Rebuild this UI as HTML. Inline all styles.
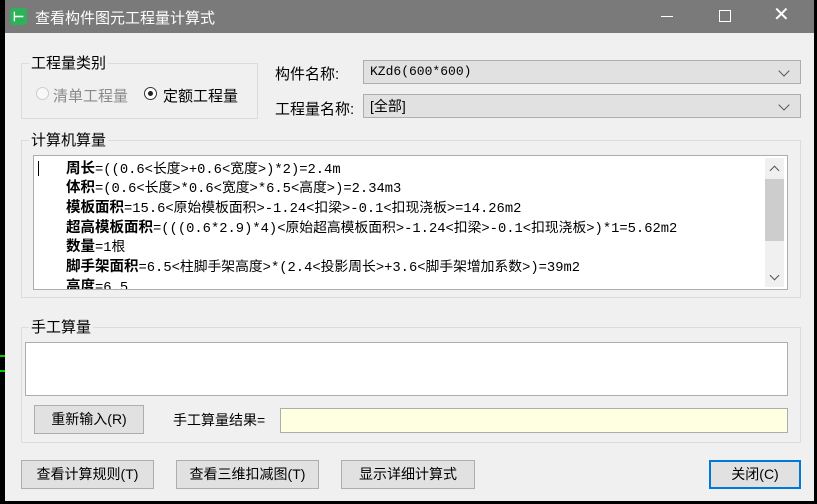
<!DOCTYPE html>
<html><head><meta charset="utf-8"><style>
*{margin:0;padding:0;box-sizing:border-box}
body{width:817px;height:504px;background:#000;position:relative;overflow:hidden;font-family:"Liberation Sans","Noto Sans CJK SC",sans-serif;font-size:14px;color:#000}
.a{position:absolute}
.win{left:5px;top:0;width:809px;height:501px;background:#f0f0f0}
.title{left:5px;top:0;width:809px;height:33px;background:#7a7a7a;color:#fff}
.grp{border:1px solid #dcdcdc}
.gt{background:#f0f0f0;padding:0 2px;font-size:15px;line-height:16px}
.combo{background:#e1e1e1;border:1px solid #adadad;height:24px;font-size:14px;line-height:22px;padding-left:6px}
.btn{background:#e1e1e1;border:1px solid #adadad;text-align:center;line-height:26px;font-size:14px}
.ln{left:66px;font-family:"Liberation Mono","Noto Sans CJK SC",monospace;font-size:13.8px;line-height:16px;white-space:nowrap;letter-spacing:0}
.ln b{font-family:"Noto Sans CJK SC",sans-serif;font-size:14.5px;letter-spacing:0}
.chev{width:8px;height:8px;border-right:1.5px solid #555;border-bottom:1.5px solid #555;transform:rotate(45deg)}
</style></head><body>
<div class="a" style="left:0;top:355px;width:5px;height:2px;background:#0c0"></div>
<div class="a" style="left:0;top:370px;width:5px;height:2px;background:#0c0"></div>
<div class="a win"></div>
<div class="a title">
 <div class="a" style="left:5px;top:8px;width:17px;height:17px;background:#2cb35a;border-radius:3px;color:#fff;font-weight:bold;font-size:13px;line-height:17px;text-align:center">⊢</div>
 <div class="a" style="left:30px;top:7px;font-size:15px">查看构件图元工程量计算式</div>
 <div class="a" style="left:656px;top:16px;width:12px;height:1px;background:#fff"></div>
 <div class="a" style="left:714px;top:10px;width:12px;height:12px;border:1px solid #fff"></div>
 <div class="a" style="left:768px;top:3px;font-size:20px;line-height:24px">✕</div>
</div>
<div class="a grp" style="left:21px;top:63px;width:237px;height:56px"></div>
<div class="a gt" style="left:29px;top:56px">工程量类别</div>
<div class="a" style="left:36px;top:87px;width:13px;height:13px;border:1px solid #ccc;border-radius:50%;background:#f8f8f8"></div>
<div class="a" style="left:53px;top:85px;color:#8a8a8a;font-size:15px">清单工程量</div>
<div class="a" style="left:144px;top:87px;width:13px;height:13px;border:1px solid #333;border-radius:50%;background:#fff"></div>
<div class="a" style="left:148px;top:91px;width:5px;height:5px;border-radius:50%;background:#222"></div>
<div class="a" style="left:163px;top:85px;font-size:15px">定额工程量</div>
<div class="a" style="left:275px;top:63px;font-size:15px">构件名称:</div>
<div class="a" style="left:275px;top:98px;font-size:15px">工程量名称:</div>
<div class="a combo" style="left:363px;top:60px;width:438px;font-family:'Liberation Mono','Noto Sans CJK SC',monospace;font-size:13px">KZd6(600*600)<div class="a chev" style="right:12px;top:6px"></div></div>
<div class="a combo" style="left:363px;top:94px;width:438px">[全部]<div class="a chev" style="right:12px;top:6px"></div></div>
<div class="a grp" style="left:21px;top:140px;width:780px;height:158px"></div>
<div class="a gt" style="left:29px;top:133px">计算机算量</div>
<div class="a" style="left:33px;top:155px;width:755px;height:135px;background:#fff;border:1px solid #adadad"></div>
<div class="a" style="left:38px;top:161px;width:1px;height:15px;background:#000"></div>
<div class="a" style="left:765px;top:158px;width:19px;height:129px;background:#f0f0f0"></div>
<div class="a" style="left:765px;top:179px;width:19px;height:62px;background:#cdcdcd"></div>
<div class="a" style="left:771px;top:167px;width:7px;height:7px;border-left:1.5px solid #555;border-top:1.5px solid #555;transform:rotate(45deg)"></div>
<div class="a" style="left:771px;top:272px;width:7px;height:7px;border-right:1.5px solid #555;border-bottom:1.5px solid #555;transform:rotate(45deg)"></div>
<div class="a" style="left:34px;top:156px;width:730px;height:133px;overflow:hidden">
<div class="a ln" style="left:32px;top:4px"><b>周长</b>=((0.6&lt;长度&gt;+0.6&lt;宽度&gt;)*2)=2.4m</div>
<div class="a ln" style="left:32px;top:23px"><b>体积</b>=(0.6&lt;长度&gt;*0.6&lt;宽度&gt;*6.5&lt;高度&gt;)=2.34m3</div>
<div class="a ln" style="left:32px;top:43px"><b>模板面积</b>=15.6&lt;原始模板面积&gt;-1.24&lt;扣梁&gt;-0.1&lt;扣现浇板&gt;=14.26m2</div>
<div class="a ln" style="left:32px;top:63px"><b>超高模板面积</b>=(((0.6*2.9)*4)&lt;原始超高模板面积&gt;-1.24&lt;扣梁&gt;-0.1&lt;扣现浇板&gt;)*1=5.62m2</div>
<div class="a ln" style="left:32px;top:82px"><b>数量</b>=1根</div>
<div class="a ln" style="left:32px;top:102px"><b>脚手架面积</b>=6.5&lt;柱脚手架高度&gt;*(2.4&lt;投影周长&gt;+3.6&lt;脚手架增加系数&gt;)=39m2</div>
<div class="a ln" style="left:32px;top:122px"><b>高度</b>=6.5</div>
</div>
<div class="a grp" style="left:21px;top:327px;width:780px;height:116px"></div>
<div class="a gt" style="left:29px;top:320px">手工算量</div>
<div class="a" style="left:25px;top:342px;width:763px;height:54px;background:#fff;border:1px solid #adadad"></div>
<div class="a btn" style="left:34px;top:405px;width:110px;height:29px">重新输入(R)</div>
<div class="a" style="left:173px;top:410px;font-size:14px">手工算量结果=</div>
<div class="a" style="left:280px;top:408px;width:508px;height:25px;background:#ffffe1;border:1px solid #adadad"></div>
<div class="a btn" style="left:21px;top:460px;width:133px;height:29px">查看计算规则(T)</div>
<div class="a btn" style="left:176px;top:460px;width:143px;height:29px">查看三维扣减图(T)</div>
<div class="a btn" style="left:341px;top:460px;width:134px;height:29px">显示详细计算式</div>
<div class="a btn" style="left:709px;top:460px;width:92px;height:29px;border:2px solid #0078d7;line-height:25px">关闭(C)</div>
</body></html>
